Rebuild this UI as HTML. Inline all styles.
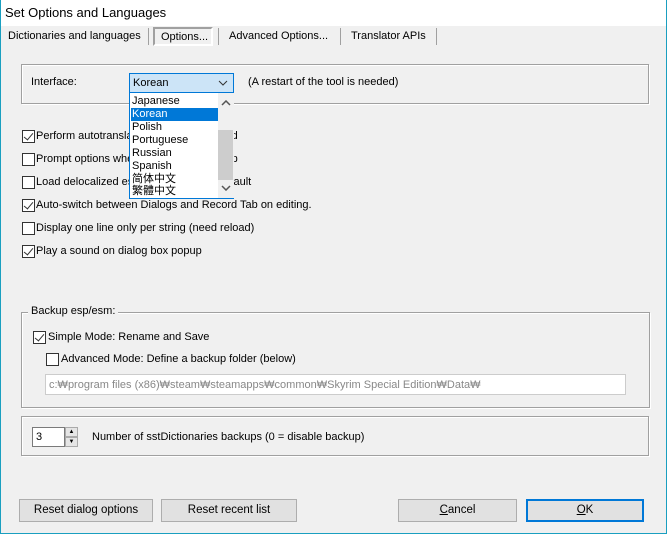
<!DOCTYPE html><html><head><style>
*{box-sizing:border-box;margin:0;padding:0}
body{width:667px;height:534px;background:#f0f0f0;font-family:"Liberation Sans","Noto Sans CJK KR",sans-serif;font-size:11px;color:#000;position:relative;overflow:hidden}
.frame{position:absolute;left:0;top:0;width:667px;height:534px;border-left:1px solid #1a9fc0;border-right:1px solid #1a9fc0;border-bottom:1px solid #1a9fc0;pointer-events:none}
.a{position:absolute;white-space:nowrap}
.sunk{position:absolute;border:1px solid #a0a0a0;box-shadow:1px 1px 0 #fff, inset 1px 1px 0 #fff}
.cb{position:absolute;width:13px;height:13px;border:1px solid #333;background:#fff}
.cb.c::after{content:"";position:absolute;left:3px;top:0px;width:4px;height:8px;border:solid #333;border-width:0 1.5px 1.5px 0;transform:rotate(40deg)}
.btn{position:absolute;height:23px;border:1px solid #adadad;background:#e1e1e1;text-align:center;line-height:21px;font-size:11.5px}
.it{position:absolute;left:1px;width:87px;height:13px;line-height:13px;padding-left:1px}
</style></head><body>
<div class="a" style="left:0;top:0;width:667px;height:26px;background:#fff"></div>
<div class="a" style="left:5px;top:5px;font-size:13px">Set Options and Languages</div>
<div class="a" style="left:8px;top:30px">Dictionaries and languages</div>
<div class="a" style="left:148px;top:28px;width:1px;height:17px;background:#a0a0a0"></div>
<div class="a" style="left:153px;top:27px;width:60px;height:19px;border:2px solid #a0a0a0;border-right-color:#fff;border-bottom-color:#fff;background:#f0f0f0;padding:2px 0 0 6px">Options...</div>
<div class="a" style="left:218px;top:28px;width:1px;height:17px;background:#a0a0a0"></div>
<div class="a" style="left:229px;top:30px">Advanced Options...</div>
<div class="a" style="left:340px;top:28px;width:1px;height:17px;background:#a0a0a0"></div>
<div class="a" style="left:351px;top:30px">Translator APIs</div>
<div class="a" style="left:436px;top:28px;width:1px;height:17px;background:#a0a0a0"></div>

<div class="sunk" style="left:21px;top:64px;width:628px;height:40px"></div>
<div class="a" style="left:31px;top:76px">Interface:</div>
<div class="a" style="left:248px;top:76px">(A restart of the tool is needed)</div>

<div class="cb c" style="left:22px;top:130px"></div><div class="a" style="left:36px;top:130px">Perform autotranslation after loading load</div>
<div class="cb" style="left:22px;top:153px"></div><div class="a" style="left:36px;top:153px">Prompt options when loading an esm/esp</div>
<div class="cb" style="left:22px;top:176px"></div><div class="a" style="left:36px;top:176px">Load delocalized esp/esm Strings by default</div>
<div class="cb c" style="left:22px;top:199px"></div><div class="a" style="left:36px;top:199px">Auto-switch between Dialogs and Record Tab on editing.</div>
<div class="cb" style="left:22px;top:222px"></div><div class="a" style="left:36px;top:222px">Display one line only per string (need reload)</div>
<div class="cb c" style="left:22px;top:245px"></div><div class="a" style="left:36px;top:245px">Play a sound on dialog box popup</div>

<div class="a" style="left:129px;top:73px;width:105px;height:20px;background:#cce4f7;border:1px solid #0078d7;padding:3px 0 0 3px">Korean<svg style="position:absolute;right:5px;top:6px" width="10" height="6"><path d="M1 1L5 5L9 1" stroke="#333" fill="none"/></svg></div>
<div class="a" style="left:129px;top:92px;width:105px;height:107px;background:#fff;border:1px solid #0078d7;font-size:11px">
<div class="it" style="top:2px">Japanese</div>
<div class="it" style="top:15px;background:#0078d7;color:#fff">Korean</div>
<div class="it" style="top:28px">Polish</div>
<div class="it" style="top:41px">Portuguese</div>
<div class="it" style="top:54px">Russian</div>
<div class="it" style="top:67px">Spanish</div>
<div class="it" style="top:80px">简体中文</div>
<div class="it" style="top:92px">繁體中文</div>
<div class="a" style="left:88px;top:0;width:16px;height:105px;background:#f0f0f0"></div>
<svg class="a" style="left:91px;top:7px" width="10" height="6"><path d="M1 5L5 1L9 5" stroke="#555" stroke-width="1.5" fill="none"/></svg>
<div class="a" style="left:88px;top:37px;width:15px;height:50px;background:#cdcdcd"></div>
<svg class="a" style="left:91px;top:92px" width="10" height="6"><path d="M1 1L5 5L9 1" stroke="#555" stroke-width="1.5" fill="none"/></svg>
</div>

<div class="sunk" style="left:21px;top:312px;width:629px;height:96px"></div>
<div class="a" style="left:28px;top:305px;background:#f0f0f0;padding:0 3px">Backup esp/esm:</div>
<div class="cb c" style="left:33px;top:331px"></div><div class="a" style="left:48px;top:331px">Simple Mode: Rename and Save</div>
<div class="cb" style="left:46px;top:353px"></div><div class="a" style="left:61px;top:353px">Advanced Mode: Define a backup folder (below)</div>
<div class="a" style="left:45px;top:374px;width:581px;height:21px;border:1px solid #ccc;background:#fff;color:#888;padding:4px 0 0 3px">c:₩program files (x86)₩steam₩steamapps₩common₩Skyrim Special Edition₩Data₩</div>

<div class="sunk" style="left:21px;top:416px;width:628px;height:40px"></div>
<div class="a" style="left:32px;top:427px;width:33px;height:20px;border:1px solid #7a7a7a;background:#fff;padding:3px 0 0 3px">3</div>
<div class="a" style="left:65px;top:427px;width:13px;height:10px;border:1px solid #aaa;background:#e5e5e5;font-size:6px;text-align:center;line-height:8px">▲</div>
<div class="a" style="left:65px;top:437px;width:13px;height:10px;border:1px solid #aaa;background:#e5e5e5;font-size:6px;text-align:center;line-height:8px">▼</div>
<div class="a" style="left:92px;top:431px">Number of sstDictionaries backups (0 = disable backup)</div>

<div class="btn" style="left:19px;top:499px;width:134px">Reset dialog options</div>
<div class="btn" style="left:161px;top:499px;width:136px">Reset recent list</div>
<div class="btn" style="left:398px;top:499px;width:119px"><u>C</u>ancel</div>
<div class="btn" style="left:526px;top:499px;width:118px;border:2px solid #0078d7;line-height:19px"><u>O</u>K</div>
<div class="frame"></div>
</body></html>
